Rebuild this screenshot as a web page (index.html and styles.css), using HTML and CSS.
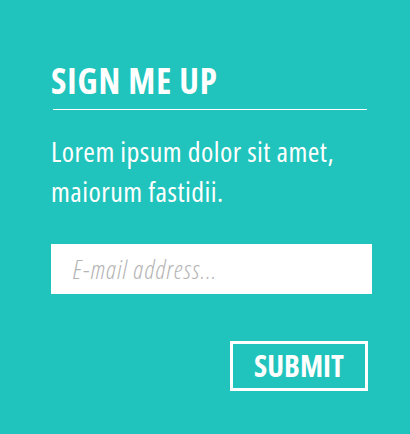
FILE: index.html
```html
<!DOCTYPE html>
<html>
<head>
<meta charset="utf-8">
<link rel="stylesheet" href="styles.css">
</head>
<body>
<form class="signup">
  <h1 class="signup-title">SIGN ME UP</h1>
  <div class="signup-rule"></div>
  <p class="signup-text">Lorem ipsum dolor sit amet, maiorum fastidii.</p>
  <input class="signup-input" type="email" placeholder="E-mail address...">
  <div class="signup-actions">
    <button class="signup-submit" type="button">SUBMIT</button>
  </div>
</form>
</body>
</html>
```
FILE: styles.css
```css
html, body {
  margin: 0;
  height: 100%;
}
body {
  background: #20c4bc;
  font-family: "Open Sans", sans-serif;
  font-stretch: 75%;
  color: #fff;
}
.signup {
  display: flex;
  flex-direction: column;
  padding: 61px 38px 0 51px;
}
.signup-title {
  margin: 0;
  font-size: 35px;
  line-height: 40px;
  font-weight: 700;
  letter-spacing: 0.9px;
  padding-bottom: 8px;
}
.signup-rule {
  height: 1px;
  background: #fff;
  margin: 0 5px 0 2px;
}
.signup-text {
  margin: 21px 0 0;
  font-size: 28px;
  line-height: 40px;
  font-weight: 400;
  letter-spacing: 0.45px;
}
.signup-input {
  margin-top: 33px;
  height: 50px;
  box-sizing: border-box;
  border: 0;
  outline: 0;
  padding: 0 0 0 22px;
  background: #fff;
  font-family: inherit;
  font-stretch: 75%;
  font-size: 25px;
  font-style: italic;
  font-weight: 300;
  letter-spacing: 1.2px;
}
.signup-input::placeholder {
  color: #b3b3b3;
  opacity: 1;
}
.signup-actions {
  display: flex;
  justify-content: flex-end;
  margin-top: 47px;
  padding-right: 4px;
}
.signup-submit {
  width: 138px;
  height: 50px;
  box-sizing: border-box;
  border: 3px solid #fff;
  background: transparent;
  color: #fff;
  font-family: inherit;
  font-stretch: 75%;
  font-size: 30px;
  font-weight: 700;
  line-height: 1;
  padding: 0;
}
```
